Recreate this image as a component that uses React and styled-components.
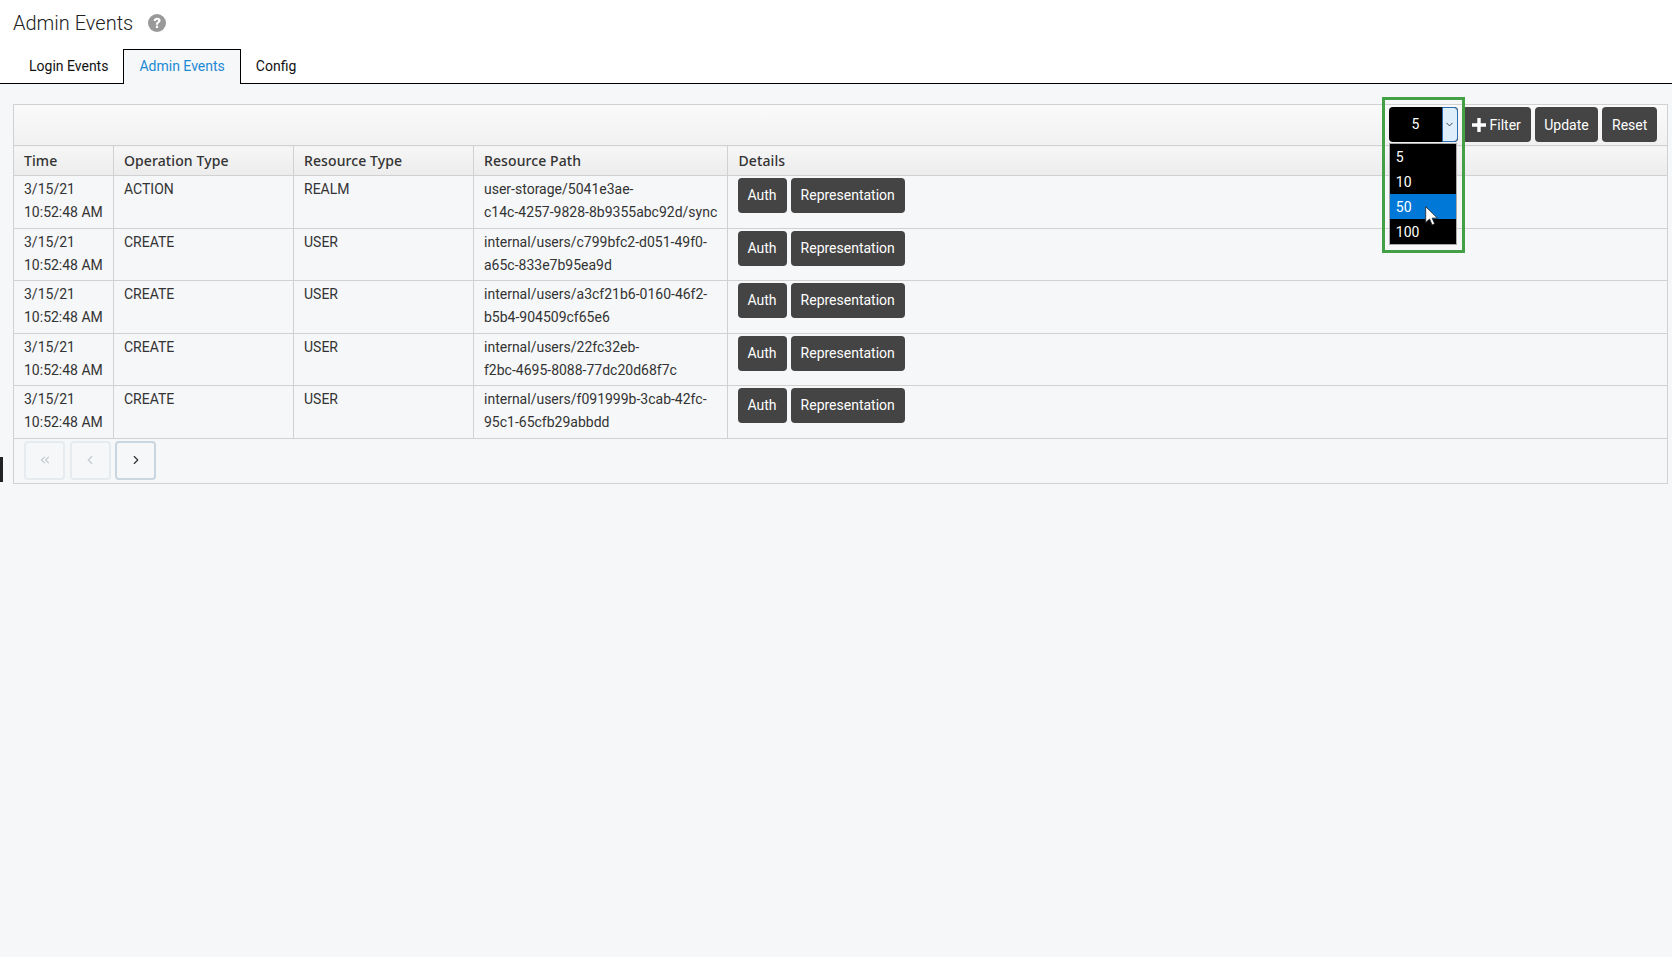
import React from "react";
import styled, { createGlobalStyle } from "styled-components";
import { ChevronDown, ChevronLeft, ChevronRight, ChevronsLeft } from "lucide-react";

const GlobalStyle = createGlobalStyle`
  html, body {
    margin: 0;
    padding: 0;
    background-color: #f6f7f9;
  }
  body {
    min-height: 957px;
    font-family: Roboto, "Liberation Sans", sans-serif;
  }
`;

const rows = [
  { op: "ACTION", res: "REALM", path: ["user-storage/5041e3ae-", "c14c-4257-9828-8b9355abc92d/sync"] },
  { op: "CREATE", res: "USER", path: ["internal/users/c799bfc2-d051-49f0-", "a65c-833e7b95ea9d"] },
  { op: "CREATE", res: "USER", path: ["internal/users/a3cf21b6-0160-46f2-", "b5b4-904509cf65e6"] },
  { op: "CREATE", res: "USER", path: ["internal/users/22fc32eb-", "f2bc-4695-8088-77dc20d68f7c"] },
  { op: "CREATE", res: "USER", path: ["internal/users/f091999b-3cab-42fc-", "95c1-65cfb29abbdd"] },
];

function App() {
  return (
    <>
      <GlobalStyle />
      <Header>
        <TitleRow>
          <Title>Admin Events</Title>
          <HelpIcon viewBox="0 0 24 24">
            <circle cx="12" cy="12" r="12" fill="#999" />
            <path
              d="M7.500 9.200c.2-2.800 2.200-4.300 4.800-4.300 2.600 0 4.500 1.500 4.500 3.700 0 1.700-1 2.600-2.200 3.400-.9.600-1.100 1-1.100 2.200h-3c0-1.900.5-2.800 1.700-3.700.9-.6 1.400-1 1.400-1.700 0-.8-.7-1.300-1.400-1.300-.9 0-1.500.6-1.600 1.700z"
              fill="#fff"
            />
            <rect x="10.500" y="15.500" width="3" height="3.200" fill="#fff" />
          </HelpIcon>
        </TitleRow>
        <Tabs>
          <Tab>Login Events</Tab>
          <Tab $active>Admin Events</Tab>
          <Tab>Config</Tab>
        </Tabs>
      </Header>
      <Content>
        <Panel>
          <Toolbar>
            <SelectWrap>
              <SelectBox>
                <SelectValue>5</SelectValue>
                <SelectArrow>
                  <ChevronDown size={11} strokeWidth={2} color="#333" />
                </SelectArrow>
              </SelectBox>
              <OptionList>
                <Option>5</Option>
                <Option>10</Option>
                <Option $hover>
                  50
                  <Cursor viewBox="0 0 13 20">
                    <path d="M.7.700v15.800l3.900-3.500 2.500 5.900 2.500-1.100-2.500-5.700h5.300z" fill="#fff" stroke="#222" strokeWidth=".8" />
                  </Cursor>
                </Option>
                <Option>100</Option>
              </OptionList>
              <Highlight />
            </SelectWrap>
            <ToolButton>
              <PlusIcon viewBox="0 0 14 14">
                <path d="M5.300 0h3.400v5.300H14v3.400H8.700V14H5.300V8.700H0V5.300h5.300z" fill="#fff" />
              </PlusIcon>
              Filter
            </ToolButton>
            <ToolButton>Update</ToolButton>
            <ToolButton>Reset</ToolButton>
          </Toolbar>
          <EventsTable>
            <colgroup>
              <col style={{ width: 99 }} />
              <col style={{ width: 180 }} />
              <col style={{ width: 180 }} />
              <col style={{ width: 254 }} />
              <col />
            </colgroup>
            <thead>
              <tr>
                <Th>Time</Th>
                <Th>Operation Type</Th>
                <Th>Resource Type</Th>
                <Th>Resource Path</Th>
                <Th>Details</Th>
              </tr>
            </thead>
            <tbody>
              {rows.map((row, i) => (
                <tr key={i}>
                  <Td>
                    3/15/21
                    <br />
                    10:52:48 AM
                  </Td>
                  <Td>{row.op}</Td>
                  <Td>{row.res}</Td>
                  <Td>
                    {row.path[0]}
                    <br />
                    {row.path[1]}
                  </Td>
                  <Td>
                    <DetailButtons>
                      <DetailButton>Auth</DetailButton>
                      <DetailButton>Representation</DetailButton>
                    </DetailButtons>
                  </Td>
                </tr>
              ))}
            </tbody>
          </EventsTable>
          <Pager>
            <PageButton disabled>
              <ChevronsLeft size={14} />
            </PageButton>
            <PageButton disabled>
              <ChevronLeft size={14} />
            </PageButton>
            <PageButton>
              <ChevronRight size={14} />
            </PageButton>
          </Pager>
        </Panel>
        <SideMark />
      </Content>
    </>
  );
}

const Header = styled.header`
  background-color: #fff;
  border-bottom: 1px solid #000;
  height: 84px;
  box-sizing: border-box;
  padding-top: 10px;
`;

const TitleRow = styled.div`
  height: 39px;
  padding-left: 13px;
  display: flex;
  align-items: flex-start;
  gap: 15px;
`;

const Title = styled.h1`
  margin: 0;
  font-size: 20px;
  line-height: 26px;
  font-weight: 300;
  color: #222;
`;

const HelpIcon = styled.svg`
  width: 18px;
  height: 18px;
  margin-top: 4px;
`;

const Tabs = styled.nav`
  display: flex;
  padding-left: 14px;
  height: 34px;
`;

const Tab = styled.a`
  padding: ${(p) => (p.$active ? "0 15px 2px" : "0 14px 2px")};
  height: 35px;
  box-sizing: border-box;
  display: flex;
  align-items: center;
  font-size: 14px;
  color: ${(p) => (p.$active ? "#1a8ad4" : "#111")};
  background-color: ${(p) => (p.$active ? "#f6f7f9" : "transparent")};
  border: 1px solid ${(p) => (p.$active ? "#000" : "transparent")};
  border-bottom: none;
  z-index: 1;
`;

const Content = styled.main`
  position: relative;
  padding: 20px 4px 0 13px;
`;

const SideMark = styled.div`
  position: absolute;
  left: 0;
  top: 373px;
  width: 3px;
  height: 25px;
  background-color: #222;
`;

const Panel = styled.section`
  border: 1px solid #d1d1d1;
`;

const Toolbar = styled.div`
  height: 40px;
  box-sizing: border-box;
  padding: 2px 10px 0 0;
  display: flex;
  justify-content: flex-end;
  gap: 4px;
  background: linear-gradient(#fafafa, #f1f1f1);
`;

const SelectWrap = styled.div`
  position: relative;
  width: 69px;
`;

const SelectBox = styled.div`
  height: 35px;
  display: flex;
  border-radius: 4px;
  overflow: hidden;
  background-color: #000;
`;

const SelectValue = styled.span`
  flex: 1;
  color: #fff;
  font-size: 14px;
  line-height: 35px;
  text-align: center;
`;

const SelectArrow = styled.span`
  width: 16px;
  box-sizing: border-box;
  display: flex;
  align-items: center;
  justify-content: center;
  background-color: #dfeefb;
  border: 1px solid #2a6db0;
  border-radius: 0 4px 4px 0;
`;

const OptionList = styled.ul`
  position: absolute;
  top: 36px;
  left: 0;
  width: 68px;
  box-sizing: border-box;
  margin: 0;
  padding: 0;
  list-style: none;
  background-color: #000;
  border: 1px solid #a9a9a9;
  z-index: 2;
`;

const Option = styled.li`
  position: relative;
  height: 25px;
  line-height: 26px;
  padding-left: 6px;
  font-size: 14px;
  color: #fff;
  background-color: ${(p) => (p.$hover ? "#0078d7" : "transparent")};
`;

const Cursor = styled.svg`
  position: absolute;
  left: 35px;
  top: 12px;
  width: 13px;
  height: 20px;
  z-index: 4;
`;

const Highlight = styled.div`
  position: absolute;
  left: -7px;
  top: -10px;
  width: 83px;
  height: 156px;
  box-sizing: border-box;
  border: 3px solid #43a047;
  z-index: 3;
  pointer-events: none;
`;

const ToolButton = styled.button`
  height: 35px;
  padding: 1px 9.7px 0;
  display: flex;
  align-items: center;
  gap: 4px;
  border: none;
  border-radius: 4px;
  background-color: #444;
  color: #fff;
  font-family: inherit;
  font-size: 14px;
`;

const PlusIcon = styled.svg`
  width: 14px;
  height: 14px;
`;

const EventsTable = styled.table`
  width: 100%;
  table-layout: fixed;
  border-collapse: collapse;
`;

const Th = styled.th`
  height: 29px;
  padding: 0 10px 0 10.5px;
  border: 1px solid #d1d1d1;
  border-left: none;
  text-align: left;
  font-size: 14px;
  font-family: "Noto Sans", Roboto, sans-serif;
  font-weight: 500;
  letter-spacing: 0.1px;
  color: #333;
  background: linear-gradient(#f6f6f6, #ececec);

  &:first-child {
    padding-left: 10px;
  }

  &:last-child {
    border-right: none;
    padding-left: 11px;
  }
`;

const Td = styled.td`
  height: 52.5px;
  box-sizing: border-box;
  padding: 2px 10px 2px 10.5px;
  border-bottom: 1px solid #d1d1d1;
  border-right: 1px solid #d1d1d1;
  vertical-align: top;
  font-size: 14px;
  line-height: 23px;
  color: #333;
  white-space: nowrap;

  &:first-child,
  &:last-child {
    padding-left: 10px;
  }

  &:last-child {
    border-right: none;
  }
`;

const DetailButtons = styled.div`
  display: flex;
  gap: 4px;
`;

const DetailButton = styled.button`
  height: 35px;
  padding: 0 10px 1px;
  border: none;
  border-radius: 4px;
  background-color: #444;
  color: #fff;
  font-family: inherit;
  font-size: 14px;
`;

const Pager = styled.div`
  height: 44px;
  box-sizing: border-box;
  padding: 2px 0 0 10px;
  display: flex;
  gap: 4.5px;
`;

const PageButton = styled.button`
  width: 41px;
  height: 39px;
  padding: 0;
  display: flex;
  align-items: center;
  justify-content: center;
  background-color: transparent;
  border: 2px solid ${(p) => (p.disabled ? "#e6ebef" : "#c9d6e0")};
  border-radius: 4px;
  color: ${(p) => (p.disabled ? "#c4c9ce" : "#333")};
`;

export default App;
